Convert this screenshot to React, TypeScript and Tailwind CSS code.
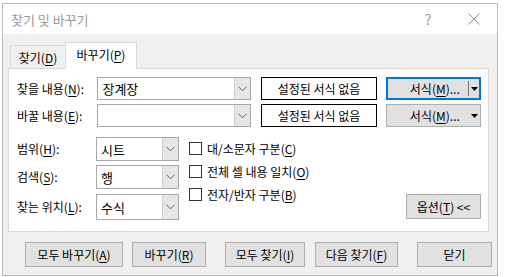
import type { ReactNode } from 'react';

function Chevron() {
  return (
    <svg width="9" height="6" viewBox="0 0 9 6" fill="none">
      <path d="M0.5 0.8 L4.5 4.8 L8.5 0.8" stroke="#606060" strokeWidth="1" />
    </svg>
  );
}

function Caret() {
  return (
    <svg width="7" height="4" viewBox="0 0 7 4">
      <path d="M0 0 H7 L3.5 4 Z" fill="#000" />
    </svg>
  );
}

function Mn({ children }: { children: ReactNode }) {
  return <span className="underline underline-offset-[2px]">{children}</span>;
}

function Combo({ value, width, height = 23 }: { value?: string; width: number; height?: number }) {
  return (
    <div
      className="flex shrink-0 border border-[#a9a9a9] bg-white"
      style={{ width, height }}
    >
      <div className="flex flex-1 items-center pl-[4px] text-[13px] leading-none">{value}</div>
      <div className="flex w-[16px] items-center justify-center border-l border-[#d0d0d0] bg-[#e6e6e6]">
        <Chevron />
      </div>
    </div>
  );
}

function Button({ children, width, className = '' }: { children: ReactNode; width: number; className?: string }) {
  return (
    <div
      className={`flex h-[25px] shrink-0 items-center justify-center border border-[#adadad] bg-[#e1e1e1] ${className}`}
      style={{ width }}
    >
      {children}
    </div>
  );
}

function Check({ children }: { children: ReactNode }) {
  return (
    <div className="flex h-[13px] items-center gap-[5px]">
      <div className="h-[13px] w-[13px] border border-[#333] bg-white" />
      <span>{children}</span>
    </div>
  );
}

export default function App() {
  return (
    <div className="h-[277px] w-[505px] overflow-hidden bg-white pl-[2px] pt-[3px] font-['Noto_Sans_CJK_KR','Noto_Sans',sans-serif] text-[12px] leading-none text-black">
      <div className="flex h-[273px] w-[496px] flex-col border border-[#b9b9b9] bg-[#f0f0f0]">
        {/* title bar */}
        <div className="flex h-[30px] shrink-0 items-center bg-white pl-[8px] text-[13px] text-[#9b9b9b]">
          <span className="flex-1">찾기 및 바꾸기</span>
          <div className="flex w-[46px] justify-center text-[14px]">?</div>
          <div className="flex w-[46px] justify-center">
            <svg width="12" height="12" viewBox="0 0 12 12">
              <path d="M0.5 0.5 L11.5 11.5 M11.5 0.5 L0.5 11.5" stroke="#8a8a8a" strokeWidth="1" />
            </svg>
          </div>
        </div>

        {/* tabs */}
        <div className="mt-[8px] flex items-end pl-[7px]">
          <div className="flex h-[23px] w-[55px] items-center justify-center border-l border-t border-[#d9d9d9] pt-[2px]">
            찾기(<Mn>D</Mn>)
          </div>
          <div className="relative z-10 mb-[-1px] flex h-[27px] w-[72px] items-center justify-center border-l border-r border-t border-[#d9d9d9] bg-white pb-[3px]">
            바꾸기(<Mn>P</Mn>)
          </div>
        </div>

        {/* panel */}
        <div className="ml-[5px] mr-[8px] flex h-[164px] flex-col border border-[#d9d9d9] bg-white pl-[8px] pr-[7px] pt-[8px]">
          <div className="flex h-[23px] items-center">
            <span className="w-[81px]">찾을 내용(<Mn>N</Mn>):</span>
            <Combo value="장계장" width={154} />
            <div className="ml-[10px] flex h-[23px] w-[116px] items-center justify-center border border-black">
              설정된 서식 없음
            </div>
            <div className="ml-[9px] flex h-[23px] w-[96px] items-center border-2 border-[#0078d7] bg-[#e1e1e1]">
              <span className="flex-1 pl-[14px] text-center">
                서식(<Mn>M</Mn>)...
              </span>
              <div className="h-[15px] w-px bg-[#7a7a7a]" />
              <div className="flex w-[10px] justify-center">
                <Caret />
              </div>
            </div>
          </div>
          <div className="mt-[4px] flex h-[23px] items-center">
            <span className="w-[81px]">바꿀 내용(<Mn>E</Mn>):</span>
            <Combo width={154} />
            <div className="ml-[10px] flex h-[23px] w-[116px] items-center justify-center border border-black">
              설정된 서식 없음
            </div>
            <div className="ml-[9px] flex h-[23px] w-[96px] items-center border border-[#adadad] bg-[#e1e1e1]">
              <span className="flex-1 pl-[14px] text-center">
                서식(<Mn>M</Mn>)...
              </span>
              <div className="flex w-[11px] justify-center">
                <Caret />
              </div>
            </div>
          </div>

          <div className="mt-[10px] flex">
            <div className="flex flex-col">
              <div className="flex h-[24px] items-center">
                <span className="w-[79px]">범위(<Mn>H</Mn>):</span>
                <Combo value="시트" width={83} height={24} />
              </div>
              <div className="mt-[4px] flex h-[24px] items-center">
                <span className="w-[79px]">검색(<Mn>S</Mn>):</span>
                <Combo value="행" width={83} height={24} />
              </div>
              <div className="mt-[5px] flex h-[26px] items-center">
                <span className="w-[79px]">찾는 위치(<Mn>L</Mn>):</span>
                <Combo value="수식" width={83} height={26} />
              </div>
            </div>
            <div className="ml-[10px] flex flex-col gap-[10px] pt-[5px]">
              <Check>
                대/소문자 구분(<Mn>C</Mn>)
              </Check>
              <Check>
                전체 셀 내용 일치(<Mn>O</Mn>)
              </Check>
              <Check>
                전자/반자 구분(<Mn>B</Mn>)
              </Check>
            </div>
            <div className="flex flex-1 items-end justify-end pb-[1px]">
              <Button width={75}>
                옵션(<Mn>T</Mn>)&nbsp;&lt;&lt;
              </Button>
            </div>
          </div>
        </div>

        {/* bottom buttons */}
        <div className="mt-[10px] flex pl-[22px]">
          <Button width={98}>
            모두 바꾸기(<Mn>A</Mn>)
          </Button>
          <Button width={74} className="ml-[9px]">
            바꾸기(<Mn>R</Mn>)
          </Button>
          <Button width={80} className="ml-[19px]">
            모두 찾기(<Mn>I</Mn>)
          </Button>
          <Button width={83} className="ml-[10px]">
            다음 찾기(<Mn>F</Mn>)
          </Button>
          <Button width={75} className="ml-[19px]">
            닫기
          </Button>
        </div>
      </div>
    </div>
  );
}
